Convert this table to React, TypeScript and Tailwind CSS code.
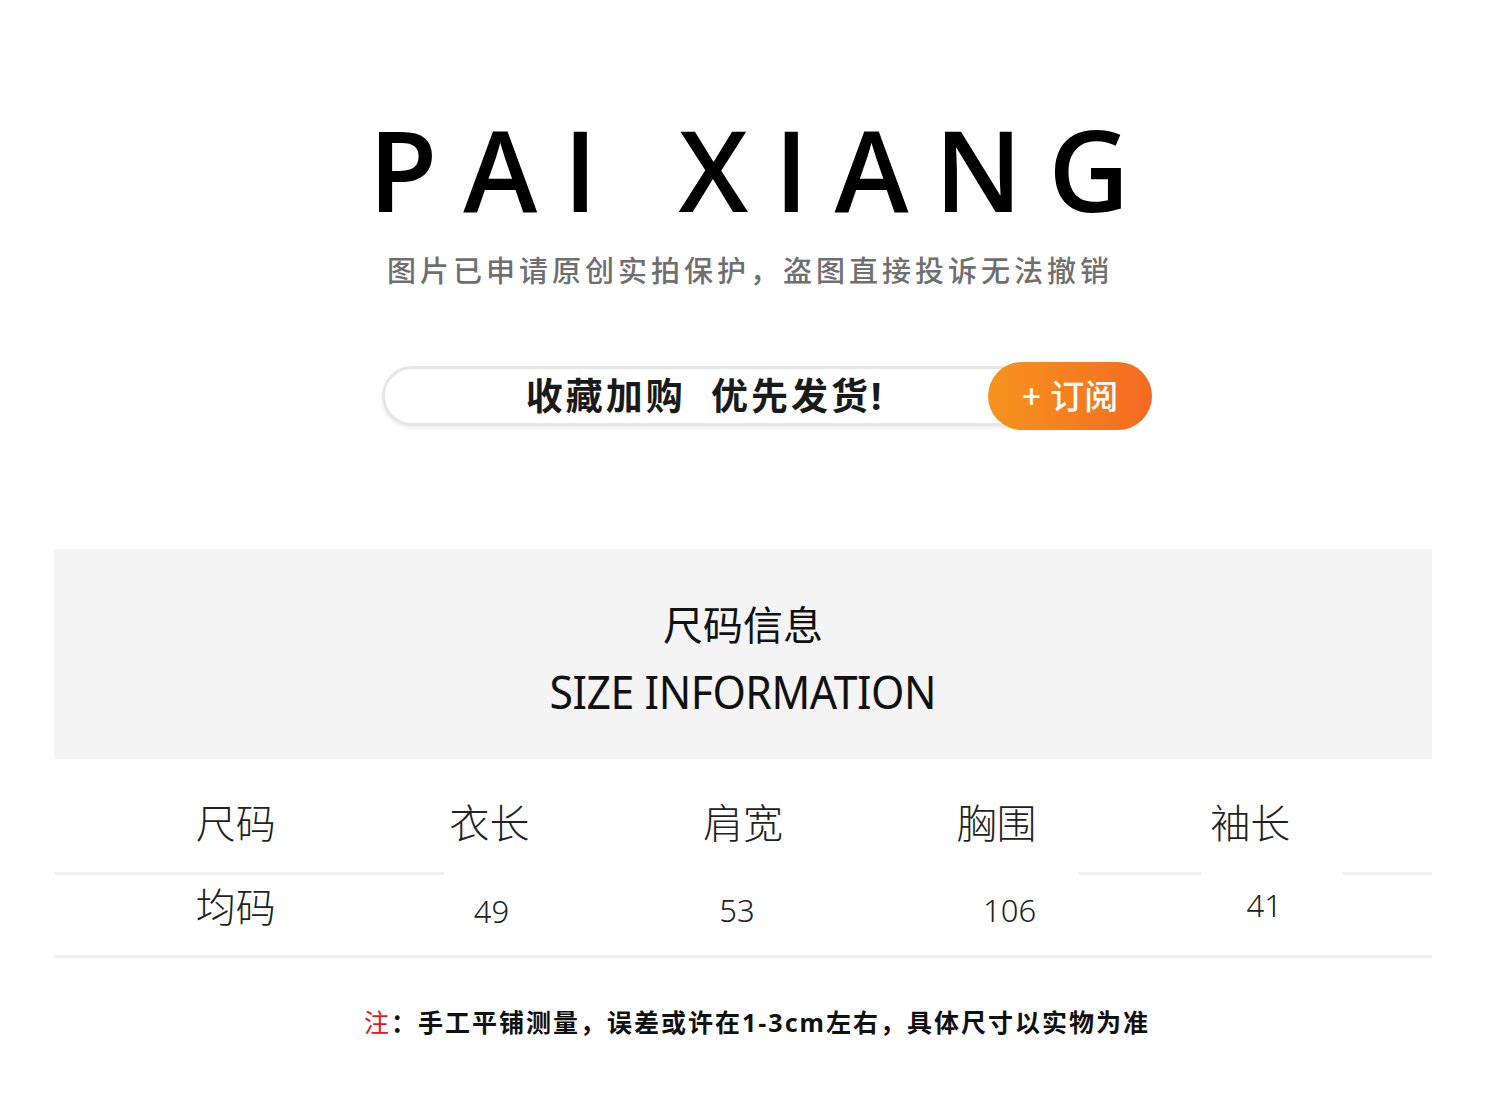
const cjk = "font-['Noto_Sans','Noto_Sans_CJK_SC',sans-serif]";

const headers = ["尺码", "衣长", "肩宽", "胸围", "袖长"];
const values = [
  { v: "均码", cls: "text-[40px] pt-[10px]" },
  { v: "49", cls: "text-[31px] pt-[14px] pl-[4px]" },
  { v: "53", cls: "text-[31px] pt-[13px] pr-[12px]" },
  { v: "106", cls: "text-[31px] pt-[13px] pl-[26px]" },
  { v: "41", cls: "text-[31px] pt-[8px] pl-[28px]" },
];

export default function App() {
  return (
    <div className={`w-[1500px] h-[1098px] bg-white flex flex-col items-center pr-[14px] text-black ${cjk}`}>
      <h1 className="mt-[106px] ml-[12px] text-[112px] leading-[126px] font-semibold tracking-[26px] pl-[26px] font-['Open_Sans',sans-serif]">
        PAI XIANG
      </h1>
      <p className="mt-[19px] ml-[14px] text-[29px] leading-[40px] font-medium tracking-[4px] text-[#6f6f6f]">
        图片已申请原创实拍保护，盗图直接投诉无法撤销
      </p>

      <div className="mt-[71px] ml-[48px] w-[770px] h-[68px] flex items-center relative">
        <div className="absolute left-0 right-[6px] top-[4px] bottom-[4px] rounded-full border-[3px] border-[#e6e6e6] bg-white shadow-[0_2px_4px_rgba(0,0,0,0.08)]" />
        <div className="relative flex-1 flex justify-center pl-[40px] text-[37px] font-bold tracking-[3px] text-[#1a1a1a]">
          收藏加购&nbsp;&nbsp;优先发货!
        </div>
        <div className="relative w-[164px] h-[68px] rounded-full bg-gradient-to-r from-[#f7931e] to-[#f26a21] flex items-center justify-center text-white text-[34px] font-medium">
          + 订阅
        </div>
      </div>

      <div className="mt-[119px] w-[1378px] h-[210px] bg-[#f4f4f4] flex flex-col items-center">
        <div className="mt-[52px] text-[40px] leading-[48px] text-[#111]">尺码信息</div>
        <div className="mt-[14px] text-[46px] leading-[56px] text-[#111] scale-x-[0.93] tracking-[-0.5px]">SIZE INFORMATION</div>
      </div>

      <div className="w-[1378px] flex flex-col">
        <div className="grid grid-cols-5 px-[55px] h-[113px] items-start pt-[38px]">
          {headers.map((h) => (
            <div key={h} className="text-center text-[40px] leading-[52px] text-[#222] font-light">
              {h}
            </div>
          ))}
        </div>
        <div className="flex h-[3px]">
          <div className="w-[390px] bg-[#efefef]" />
          <div className="w-[634px]" />
          <div className="w-[123px] bg-[#efefef]" />
          <div className="w-[141px]" />
          <div className="flex-1 bg-[#efefef]" />
        </div>
        <div className="grid grid-cols-5 px-[55px] h-[80px] items-start">
          {values.map((c) => (
            <div key={c.v} className={`text-center leading-[44px] text-[#222] font-light ${c.cls}`}>
              {c.v}
            </div>
          ))}
        </div>
        <div className="h-[3px] bg-[#efefef]" />
      </div>

      <p className="mt-[46px] ml-[28px] text-[25px] leading-[36px] font-bold text-[#111] tracking-[2px]">
        <span className="text-[#e8161b] font-normal">注</span>：手工平铺测量，误差或许在1-3cm左右，具体尺寸以实物为准
      </p>
    </div>
  );
}
